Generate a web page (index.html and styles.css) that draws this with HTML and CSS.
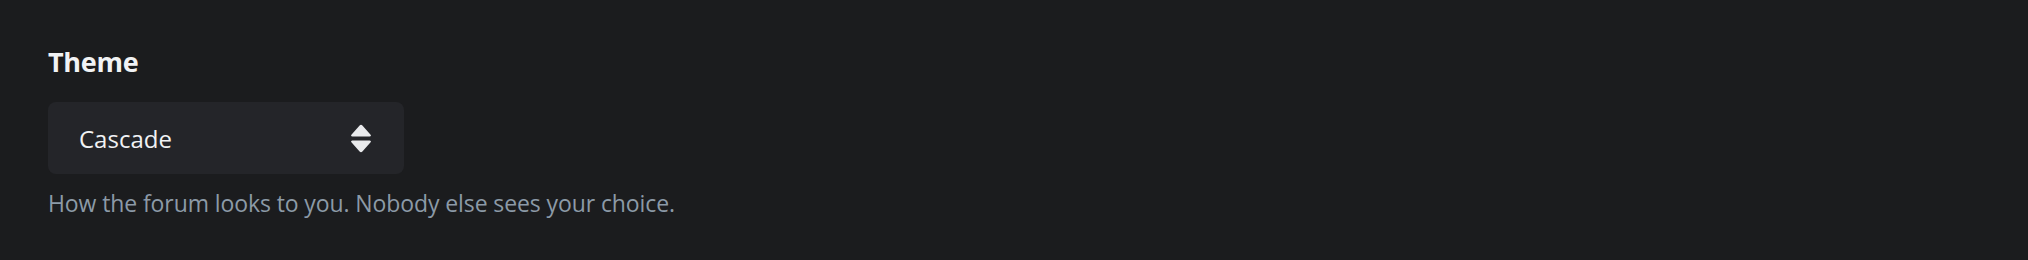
FILE: index.html
```html
<!DOCTYPE html>
<html lang="en">
<head>
  <meta charset="UTF-8" />
  <title>Theme</title>
  <link rel="stylesheet" href="styles.css">
</head>
<body>
  <div class="field">
    <label class="field-label" for="theme">Theme</label>

    <div class="select" id="theme">
      <span class="select-value">Cascade</span>
      <svg class="select-arrows" width="22" height="29" viewBox="0 0 22 29">
        <path d="M9.6 1.6 Q11 0 12.4 1.6 L20.6 10.8 Q21.6 12.5 19.6 12.5 L2.4 12.5 Q0.4 12.5 1.4 10.8 Z" fill="#e9eaec" />
        <path d="M9.6 27.4 Q11 29 12.4 27.4 L20.6 18.2 Q21.6 16.5 19.6 16.5 L2.4 16.5 Q0.4 16.5 1.4 18.2 Z" fill="#e9eaec" />
      </svg>
    </div>

    <p class="field-help">How the forum looks to you. Nobody else sees your choice.</p>
  </div>
</body>
</html>
```

FILE: styles.css
```css
body {
  background: #1b1c1e;
  font-family: "Open Sans", "Noto Sans", sans-serif;
  margin: 0;
  padding: 0;
}

.field {
  display: flex;
  flex-direction: column;
  align-items: flex-start;
  padding: 45px 48px;
}

.field-label {
  color: #f1f2f4;
  font-size: 27px;
  font-weight: bold;
  letter-spacing: -0.3px;
  line-height: 34px;
}

.select {
  display: flex;
  align-items: center;
  justify-content: space-between;
  box-sizing: border-box;
  width: 356px;
  height: 72px;
  margin-top: 23px;
  padding: 0 32px 0 31px;
  background: #242529;
  border-radius: 8px;
  cursor: pointer;
}

.select-value {
  color: #f1f2f4;
  font-size: 24px;
}

.field-help {
  margin: 13px 0 0;
  color: #8c9aa7;
  font-size: 23px;
  letter-spacing: -0.1px;
  line-height: 32px;
}
```
